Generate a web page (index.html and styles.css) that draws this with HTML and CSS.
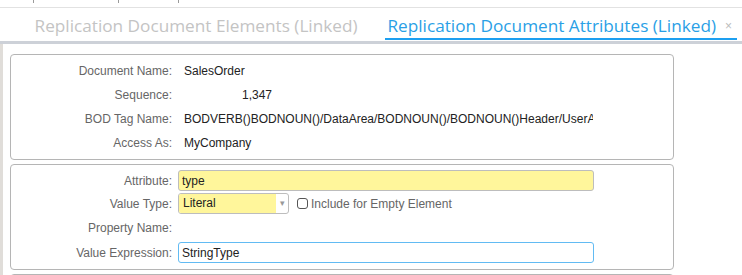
FILE: index.html
```html
<!DOCTYPE html>
<html lang="en">
<head>
    <meta charset="UTF-8">
    <title>Replication Document Attributes</title>
    <link rel="stylesheet" href="styles.css">
</head>
<body>
    <div class="top-strip">
        <span class="strip-cell c1"></span>
        <span class="strip-cell c2"></span>
        <span class="strip-cell c3"></span>
    </div>

    <div class="tabs">
        <div class="tab">Replication Document Elements</div>
        <div class="tab">Replication Document Elements (Linked)</div>
        <div class="tab active">Replication Document Attributes (Linked)<span class="close">×</span></div>
    </div>
    <div class="tab-band"></div>

    <div class="content">
        <div class="side-bar"></div>
        <div class="panels">
            <div class="panel">
                <div class="row">
                    <label>Document Name:</label>
                    <span class="value">SalesOrder</span>
                </div>
                <div class="row">
                    <label>Sequence:</label>
                    <span class="value num">1,347</span>
                </div>
                <div class="row">
                    <label>BOD Tag Name:</label>
                    <span class="value clip">BODVERB()BODNOUN()/DataArea/BODNOUN()/BODNOUN()Header/UserArea/Attributes</span>
                </div>
                <div class="row">
                    <label>Access As:</label>
                    <span class="value">MyCompany</span>
                </div>
            </div>

            <div class="panel">
                <div class="row short">
                    <label>Attribute:</label>
                    <input class="field required" type="text" value="type">
                </div>
                <div class="row short">
                    <label>Value Type:</label>
                    <div class="select">
                        <span class="select-text">Literal</span>
                        <span class="select-arrow">&#9662;</span>
                    </div>
                    <span class="check"></span>
                    <span class="check-label">Include for Empty Element</span>
                </div>
                <div class="row tall">
                    <label>Property Name:</label>
                </div>
                <div class="row tall">
                    <label>Value Expression:</label>
                    <input class="field focused" type="text" value="StringType">
                </div>
            </div>

            <div class="panel"></div>
        </div>
    </div>
</body>
</html>
```

FILE: styles.css
```css
body {
    margin: 0;
    background: #fff;
    font-family: 'Liberation Sans', Arial, sans-serif;
    font-size: 12px;
    color: #222;
    overflow: hidden;
}

.top-strip {
    height: 7px;
    border-bottom: 1px solid #e2e2e2;
    display: flex;
}

.strip-cell {
    height: 3px;
    border-right: 1px solid #9a9a9a;
}

.c1 { width: 33px; }
.c2 { width: 84px; }
.c3 { width: 59px; }

/* tab strip, scrolled to the right end */
.tabs {
    height: 32px;
    display: flex;
    justify-content: flex-end;
    align-items: stretch;
    overflow: hidden;
    padding-right: 5px;
    margin-bottom: 1px;
}

.tab {
    flex-shrink: 0;
    font-family: 'Open Sans', sans-serif;
    font-size: 17.2px;
    line-height: 24px;
    padding: 6px 3px 0 3px;
    color: #c4c4c4;
    margin-left: 29px;
    border-bottom: 2px solid transparent;
    white-space: nowrap;
}

.tab.active {
    color: #2a9fe6;
    border-bottom-color: #1d9ff0;
    margin-left: 24px;
    padding-right: 5px;
}

.close {
    font-family: 'Liberation Sans', Arial, sans-serif;
    font-size: 12px;
    color: #bcbcbc;
    margin-left: 9px;
    vertical-align: 2px;
}

.tab-band {
    height: 3px;
    background-color: #cdd1d8;
}

.content {
    display: flex;
    height: 231px;
    overflow: hidden;
}

.side-bar {
    width: 3px;
    background-color: #e0ddd9;
}

.panels {
    width: 664px;
    padding: 10px 0 0 7px;
    display: flex;
    flex-direction: column;
    gap: 4px;
}

.panel {
    flex-shrink: 0;
    border: 1px solid #b5b5b5;
    border-radius: 4px;
    padding: 4px 0;
    min-height: 20px;
}

.row {
    height: 24px;
    display: flex;
    align-items: center;
}

.row.short {
    height: 23px;
}

.row.tall {
    height: 25px;
}

.row label {
    width: 161px;
    margin-right: 6px;
    text-align: right;
    color: #666;
    flex-shrink: 0;
}

.value {
    padding-left: 6px;
    color: #222;
    white-space: nowrap;
}

.value.num {
    width: 88px;
    text-align: right;
}

.value.clip {
    width: 409px;
    overflow: hidden;
}

.field {
    box-sizing: border-box;
    width: 416px;
    height: 21px;
    padding: 0 3px;
    border: 1px solid #bdbdbd;
    border-radius: 3px;
    font-family: 'Liberation Sans', Arial, sans-serif;
    font-size: 12px;
    color: #222;
    outline: none;
}

.field.required {
    background-color: #fff69b;
}

.field.focused {
    border-color: #62bbf3;
    background-color: #fff;
}

.select {
    box-sizing: border-box;
    width: 111px;
    height: 21px;
    border: 1px solid #bdbdbd;
    border-radius: 3px;
    display: flex;
    overflow: hidden;
}

.select-text {
    flex: 1;
    background-color: #fff69b;
    padding-left: 4px;
    line-height: 19px;
}

.select-arrow {
    width: 12px;
    color: #999;
    font-size: 9px;
    line-height: 19px;
    text-align: center;
}

.check {
    box-sizing: border-box;
    width: 11px;
    height: 11px;
    border: 1px solid #555;
    border-radius: 3px;
    margin-left: 8px;
    margin-right: 3px;
}

.check-label {
    color: #666;
}
```
